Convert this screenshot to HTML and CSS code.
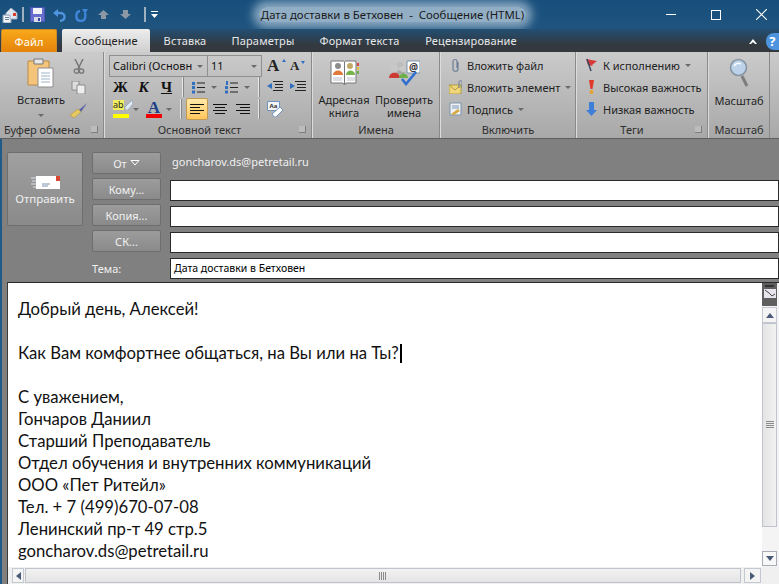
FILE: index.html
```html
<!DOCTYPE html>
<html lang="ru">
<head>
<meta charset="UTF-8">
<title>Дата доставки в Бетховен - Сообщение (HTML)</title>
<link rel="stylesheet" href="styles.css">
</head>
<body>

<div class="window">
  <div class="titlebar">
    <div class="qat">
      <svg class="qat-mail" width="16" height="16" viewBox="0 0 16 16"><path d="M1 8h8v8H1z" fill="#f4f6fa" stroke="#8aa0b8"/><path d="M3 10.500h4M3 12.500h4" stroke="#6a8098"/><path d="M4 6l5-5 6 5v6H8V8H4z" fill="#dfe6ef" stroke="#9fb0c4"/><path d="M11 6h3v3h-3z" fill="#d8402a"/></svg>
      <span class="qat-sep"></span>
      <svg class="qat-save" width="15" height="15" viewBox="0 0 15 15"><path d="M0 0h15v15H0z" fill="#4a55b8"/><path d="M1 1h13v13H1z" fill="#6670cc"/><path d="M3 1h9v6H3z" fill="#f2f4fa"/><path d="M4 10h7v5H4z" fill="#d8dcea"/><path d="M8 11h2v3H8z" fill="#3a4498"/></svg>
      <svg class="qat-undo" width="13" height="14" viewBox="0 0 13 14"><path d="M0 5l5-4v8z" fill="#4f94e0"/><path d="M4 5h3c6 0 6 7 0 8" fill="none" stroke="#4f94e0" stroke-width="2.400"/></svg>
      <svg class="qat-redo" width="13" height="14" viewBox="0 0 13 14"><path d="M13 1H7l3 5z" fill="#3f86d8"/><path d="M5 3C0 4 0 13 6 13c4 0 5-4 4-8" fill="none" stroke="#3f86d8" stroke-width="2.400"/></svg>
      <svg class="qat-up" width="11" height="9" viewBox="0 0 11 9"><path d="M5.500 0L11 5H8v4H3V5H0z" fill="#8c98a4"/></svg>
      <svg class="qat-down" width="11" height="9" viewBox="0 0 11 9"><path d="M5.500 9L11 4H8V0H3v4H0z" fill="#8c98a4"/></svg>
      <span class="qat-sep"></span>
      <svg class="qat-more" width="7" height="7" viewBox="0 0 7 7"><path d="M0 0h7v1H0zM0 3h7L3.500 7z" fill="#fff"/></svg>
    </div>
    <div class="title"><span>Дата доставки в Бетховен&nbsp; -&nbsp; Сообщение (HTML)</span></div>
    <div class="win-btns">
      <span class="win-min"></span>
      <span class="win-max"></span>
      <svg width="11" height="11" viewBox="0 0 11 11"><path d="M0 0l11 11M11 0L0 11" stroke="#fff" stroke-width="1.100"/></svg>
    </div>
  </div>

  <div class="tabs">
    <div class="tab tab-file">Файл</div>
    <div class="tab tab-active">Сообщение</div>
    <div class="tab tab-insert">Вставка</div>
    <div class="tab tab-params">Параметры</div>
    <div class="tab tab-format">Формат текста</div>
    <div class="tab tab-review">Рецензирование</div>
    <div class="tabs-right">
      <svg width="8" height="5" viewBox="0 0 8 5"><path d="M0 5l4-5 4 5H6L4 3 2 5z" fill="#fff"/></svg>
      <span class="help">?</span>
    </div>
  </div>

  <div class="ribbon">
    <div class="group g-clip">
      <div class="group-body clip-body">
        <div class="paste">
          <svg width="28" height="30" viewBox="0 0 28 30"><path d="M1 3h21v24H1z" fill="#f3c47a" stroke="#b98b45"/><path d="M7 1h9v5H7z" fill="#e8e8e8" stroke="#777"/><path d="M11 10h15v19H11z" fill="#fff" stroke="#8d8d8d"/><path d="M14 15h9M14 18h9M14 21h9M14 24h9" stroke="#9db2c8"/></svg>
          <span>Вставить</span>
          <i class="arrow"></i>
        </div>
        <div class="clip-tools">
          <svg width="12" height="15" viewBox="0 0 12 15"><path d="M2 0l5 10M10 0L5 10" stroke="#777" stroke-width="1.500"/><circle cx="3.500" cy="12" r="2.200" fill="none" stroke="#777" stroke-width="1.300"/><circle cx="8.500" cy="12" r="2.200" fill="none" stroke="#777" stroke-width="1.300"/></svg>
          <svg width="15" height="13" viewBox="0 0 15 13"><path d="M1 0h7v9H1z" fill="#ddd" stroke="#8c8c8c"/><path d="M6 4h8v9H6z" fill="#eee" stroke="#8c8c8c"/></svg>
          <svg class="brush" width="17" height="15" viewBox="0 0 17 15"><path d="M17 0l-8 7 2 2z" fill="#5b63a8"/><path d="M8 6L0 12l4 3 7-6z" fill="#e8c860" stroke="#a08a3c" stroke-width=".5"/></svg>
        </div>
      </div>
      <div class="group-label">Буфер обмена<i class="launcher"></i></div>
    </div>

    <div class="group g-text">
      <div class="group-body text-body">
        <div class="font-row">
          <div class="combo combo-font">Calibri (Основн<i class="arrow"></i></div>
          <div class="combo combo-size">11<i class="arrow"></i></div>
          <span class="grow-a">A<i class="up"></i></span>
          <span class="shrink-a">A<i class="down"></i></span>
        </div>
        <div class="tool-row row-style">
          <div class="cell-style">
            <b>Ж</b><b class="it">К</b><b class="ul">Ч</b>
          </div>
          <span class="vsep"></span>
          <div class="cell-list">
            <svg width="13" height="13" viewBox="0 0 13 13"><path d="M5 2h8M5 6.500h8M5 11h8" stroke="#222"/><path d="M0 1h3v3H0zM0 5h3v3H0zM0 9.500h3v3H0z" fill="#2e6fc0"/></svg><i class="arrow"></i>
            <svg class="num" width="13" height="13" viewBox="0 0 13 13"><path d="M5 2h8M5 6.500h8M5 11h8" stroke="#222"/><path d="M1 0h2v4H1zM0 5h3v3H0zM0 9.500h3v3H0z" fill="#2e6fc0"/></svg><i class="arrow"></i>
          </div>
          <span class="vsep"></span>
          <div class="cell-indent">
            <svg width="16" height="12" viewBox="0 0 16 12"><path d="M6 .500h10M8 3.500h8M8 6.500h8M6 9.500h10" stroke="#222"/><path d="M0 5l5-3v6z" fill="#2e6fc0"/></svg>
            <svg width="16" height="12" viewBox="0 0 16 12"><path d="M5 .500h11M7 3.500h9M7 6.500h9M5 9.500h11" stroke="#222"/><path d="M5 5L0 2v6z" fill="#2e6fc0"/></svg>
          </div>
        </div>
        <div class="tool-row">
          <div class="cell-color">
            <span class="marker"><span class="marker-txt">ab</span><svg width="9" height="10" viewBox="0 0 9 10"><path d="M8 0L1 7v3h3l5-6z" fill="#dfe8f2" stroke="#8a9aae" stroke-width=".7"/></svg><i class="bar-y"></i></span><i class="arrow"></i>
            <span class="color-a">A<i class="bar-r"></i></span><i class="arrow"></i>
          </div>
          <span class="vsep"></span>
          <div class="cell-align">
            <span class="align-btn on"><svg width="14" height="10" viewBox="0 0 14 10"><path d="M0 .500h14M0 3.500h10M0 6.500h14M0 9.500h10" stroke="#111"/></svg></span>
            <span class="align-btn"><svg width="14" height="10" viewBox="0 0 14 10"><path d="M0 .500h14M2 3.500h10M0 6.500h14M2 9.500h10" stroke="#111"/></svg></span>
            <span class="align-btn"><svg width="14" height="10" viewBox="0 0 14 10"><path d="M0 .500h14M4 3.500h10M0 6.500h14M4 9.500h10" stroke="#111"/></svg></span>
          </div>
          <span class="vsep"></span>
          <div class="cell-clear">
            <svg width="17" height="16" viewBox="0 0 17 16"><path d="M.5.500h12v9H.5z" fill="#f4f4f4" stroke="#6f93bd"/><path d="M5 13l8-7 3 3-7 7H7z" fill="#fff" stroke="#6f93bd"/><text x="2.500" y="7" class="clear-txt">Аа</text></svg>
          </div>
        </div>
      </div>
      <div class="group-label">Основной текст<i class="launcher"></i></div>
    </div>

    <div class="group g-names">
      <div class="group-body names-body">
        <div class="big-btn">
          <svg width="29" height="26" viewBox="0 0 29 26"><path d="M1 1h12c1 0 1.500 1 1.500 1S15 1 16 1h10v22H16l-1.500 2-1.500-2H1z" fill="#fff" stroke="#777"/><path d="M14.500 2v22" stroke="#777"/><circle cx="8" cy="6" r="3" fill="#8c8c8c"/><path d="M3 15c0-6 10-6 10 0z" fill="#e07a3a"/><circle cx="20" cy="6" r="3" fill="#c4a868"/><path d="M16 15c0-6 9-6 9 0z" fill="#77b34c"/><path d="M3 18h9M3 20h9M17 18h8M17 20h8" stroke="#b8c0cc"/><path d="M27 3h2v3h-2z" fill="#d94a3c"/><path d="M27 7h2v3h-2z" fill="#e8c23c"/><path d="M27 11h2v3h-2z" fill="#6fb04a"/></svg>
          <span>Адресная<br>книга</span>
        </div>
        <div class="big-btn">
          <svg width="31" height="26" viewBox="0 0 31 26"><circle cx="11" cy="5" r="3" fill="#bdbdbd"/><path d="M7 14c0-5 9-5 9 0z" fill="#a8a8a8"/><circle cx="5" cy="8" r="3.500" fill="#c8c8c8"/><path d="M0 18c0-7 11-7 11 0z" fill="#cc3a34"/><circle cx="14" cy="9" r="3" fill="#c8c8c8"/><path d="M10 18c0-6 9-6 9 0z" fill="#6fb04a"/><path d="M18 1h13v12H18z" fill="#fff" stroke="#7d93ad"/><text x="20" y="11" class="at">@</text><path d="M13 19l4 5 10-12" fill="none" stroke="#2f6fd0" stroke-width="2.600"/></svg>
          <span>Проверить<br>имена</span>
        </div>
      </div>
      <div class="group-label">Имена</div>
    </div>

    <div class="group g-include">
      <div class="group-body list-body">
        <div class="list-item">
          <svg width="13" height="14" viewBox="0 0 13 14"><path d="M9 4v7c0 3-5 3-5 0V3c0-2 4-2 4 0v7" fill="none" stroke="#6f7f95" stroke-width="1.200"/></svg>
          <span>Вложить файл</span>
        </div>
        <div class="list-item">
          <svg width="13" height="14" viewBox="0 0 13 14"><path d="M0 5h12v9H0z" fill="#f0d67a" stroke="#b09a40"/><path d="M0 5l6 5 6-5" fill="none" stroke="#b09a40"/><path d="M10 8V2c0-2 3-2 3 0v6" fill="none" stroke="#6f7f95"/></svg>
          <span>Вложить элемент</span><i class="arrow"></i>
        </div>
        <div class="list-item">
          <svg width="13" height="14" viewBox="0 0 13 14"><path d="M1 1h11v12H1z" fill="#eef2f8" stroke="#7d93ad"/><path d="M3 4h7M3 6h7" stroke="#7d93ad"/><path d="M2 12l7-5 2 2-6 4z" fill="#d9a83c"/></svg>
          <span>Подпись</span><i class="arrow"></i>
        </div>
      </div>
      <div class="group-label">Включить</div>
    </div>

    <div class="group g-tags">
      <div class="group-body list-body">
        <div class="list-item">
          <svg width="13" height="14" viewBox="0 0 13 14"><path d="M1 1l11 2-5 4 1 1-5-1z" fill="#d83a3a"/><path d="M2 1l4 12" stroke="#39485f" stroke-width="1.500"/></svg>
          <span>К исполнению</span><i class="arrow"></i>
        </div>
        <div class="list-item">
          <svg width="13" height="14" viewBox="0 0 13 14"><path d="M4 0h5L7.500 9h-2z" fill="#e0392c"/><circle cx="6.500" cy="12" r="2" fill="#e8a02c"/></svg>
          <span>Высокая важность</span>
        </div>
        <div class="list-item">
          <svg width="13" height="14" viewBox="0 0 13 14"><path d="M4 0h5v8h3l-5.500 6L1 8h3z" fill="#3f7fd8"/></svg>
          <span>Низкая важность</span>
        </div>
      </div>
      <div class="group-label">Теги<i class="launcher"></i></div>
    </div>

    <div class="group g-zoom">
      <div class="group-body zoom-body">
        <svg width="21" height="30" viewBox="0 0 21 30"><circle cx="9.500" cy="9.500" r="8" fill="#bcd2e8" stroke="#8795a3" stroke-width="1.600"/><path d="M5 8c2-3 5-3 7-2" fill="none" stroke="#fff" stroke-width="1.500"/><path d="M13 18l5 10" stroke="#7e7e7e" stroke-width="3"/></svg>
        <span>Масштаб</span>
      </div>
      <div class="group-label">Масштаб</div>
    </div>
    <div class="group-end"></div>
  </div>

  <div class="compose">
    <div class="header-area">
      <button class="send">
        <svg width="29" height="15" viewBox="0 0 29 15"><path d="M0 3h5M1 6h4M0 9h5M2 12h3" stroke="#d9dee6"/><path d="M5 1h24v13H5z" fill="#fff"/><path d="M25 1h4v5h-4z" fill="#d9482e"/><path d="M11 9h8M11 11h6" stroke="#7d93ad"/></svg>
        <span>Отправить</span>
      </button>
      <div class="fields">
        <button class="addr-btn">От<svg width="10" height="6" viewBox="0 0 10 6"><path d="M1 .500h8L5 5z" fill="none" stroke="#fff"/></svg></button>
        <div class="from">goncharov.ds@petretail.ru</div>
        <button class="addr-btn">Кому...</button>
        <div class="input"></div>
        <button class="addr-btn">Копия...</button>
        <div class="input"></div>
        <button class="addr-btn">СК...</button>
        <div class="input"></div>
        <div class="subject-label">Тема:</div>
        <div class="input subject">Дата доставки в Бетховен</div>
      </div>
    </div>

    <div class="editor">
      <div class="doc">
        <p>Добрый день, Алексей!</p>
        <p>&nbsp;</p>
        <p>Как Вам комфортнее общаться, на Вы или на Ты?<span class="caret"></span></p>
        <p>&nbsp;</p>
        <p>С уважением,</p>
        <p>Гончаров Даниил</p>
        <p>Старший Преподаватель</p>
        <p>Отдел обучения и внутренних коммуникаций</p>
        <p>ООО «Пет Ритейл»</p>
        <p>Тел. + 7 (499)670-07-08</p>
        <p>Ленинский пр-т 49 стр.5</p>
        <p>goncharov.ds@petretail.ru</p>
      </div>
      <div class="vscroll">
        <div class="split">
          <i></i>
          <svg width="12" height="9" viewBox="0 0 12 9"><path d="M0 0h12v9H0z" fill="#e8e4ee"/><path d="M1 1l4 3M5 4l3 3M8 7l3-2" stroke="#444"/></svg>
        </div>
        <div class="sb-btn"><i class="tri-up"></i></div>
        <div class="v-thumb"><span></span></div>
        <div class="sb-trough"></div>
        <div class="sb-btn sb-down"><i class="tri-down"></i></div>
      </div>
      <div class="hscroll">
        <div class="sb-btn-h"><i class="tri-left"></i></div>
        <div class="h-thumb"><span></span></div>
        <div class="sb-btn-h sb-right"><i class="tri-right"></i></div>
      </div>
    </div>
  </div>
</div>

</body>
</html>
```

FILE: styles.css
```css
/* General */
* {
  box-sizing: border-box;
}

html, body {
  margin: 0;
  padding: 0;
  height: 100%;
  overflow: hidden;
}

body {
  font-family: "Noto Sans", Arial, sans-serif;
  font-size: 11px;
  color: #222;
}

.window {
  width: 779px;
  height: 584px;
  display: flex;
  flex-direction: column;
  background: #808080;
}

i {
  display: block;
}

svg {
  display: block;
  flex: none;
}

/* Title bar */
.titlebar {
  height: 29px;
  display: flex;
  align-items: center;
  background: linear-gradient(#174f7c, #1f547e);
}

.qat {
  display: flex;
  align-items: center;
  padding-left: 2px;
}

.qat-sep {
  width: 2px;
  height: 15px;
  background: #9fb0bf;
  margin: 0 5px 0 4px;
}

.qat-undo { margin-left: 3px; }
.qat-save { margin-left: 1px; margin-right: 5px; }
.qat-redo { margin-left: 9px; }
.qat-up { margin-left: 10px; }
.qat-down { margin-left: 11px; margin-right: 9px; }

.title {
  flex: 1;
  text-align: center;
  color: #1a1a1a;
  font-size: 11.400px;
  margin-left: 22px;
}

.title span {
  background: rgba(185, 205, 222, 0.75);
  box-shadow: 0 0 10px 6px rgba(185, 205, 222, 0.7);
  border-radius: 8px;
  padding: 0 2px;
}

.win-btns {
  width: 174px;
  display: flex;
  align-items: center;
  gap: 35px;
  padding-left: 61px;
}

.win-min {
  width: 10px;
  height: 1px;
  background: #fff;
}

.win-max {
  width: 10px;
  height: 10px;
  border: 1px solid #fff;
}

/* Tabs */
.tabs {
  height: 23px;
  display: flex;
  align-items: flex-end;
  background: linear-gradient(#224f74, #33393e 70%);
  color: #e8e8e8;
  font-size: 11px;
  letter-spacing: 0.15px;
}

.tab {
  height: 23px;
  line-height: 23px;
  text-align: center;
}

.tab-file {
  width: 56px;
  margin-left: 1px;
  color: #fff;
  background: linear-gradient(#f8a81a, #e5830a);
  border: 1px solid #c98a2c;
  border-bottom: none;
  border-radius: 2px 2px 0 0;
}

.tab-active {
  width: 88px;
  margin-left: 5px;
  color: #222;
  background: linear-gradient(#ededed, #cfcfcf);
  border-radius: 2px 2px 0 0;
}

.tab-insert { width: 70px; }
.tab-params { width: 86px; }
.tab-format { width: 107px; }
.tab-review { width: 116px; }

.tabs-right {
  margin-left: auto;
  height: 22px;
  display: flex;
  align-items: center;
  gap: 9px;
}

.help {
  width: 13px;
  height: 17px;
  line-height: 17px;
  text-align: center;
  background: #4d93de;
  color: #fff;
  font-weight: 700;
  font-size: 13px;
  border-radius: 8px 0 0 8px;
}

/* Ribbon */
.ribbon {
  height: 87px;
  display: flex;
  background: linear-gradient(#cbcbcb, #a8a8a8);
  border-bottom: 1px solid #5e5e5e;
}

.group {
  display: flex;
  flex-direction: column;
  border-right: 1px solid #8a8a8a;
  border-left: 1px solid #dcdcdc;
}

.group-body {
  flex: 1;
  min-height: 0;
}

.group-label {
  height: 17px;
  line-height: 17px;
  text-align: center;
  color: #2e2e2e;
  position: relative;
}

.launcher {
  position: absolute;
  right: 5px;
  top: 5px;
  width: 7px;
  height: 7px;
  border: 1px solid #7e7e7e;
  border-width: 0 1px 1px 0;
  background: #bcbcbc;
}

.g-clip { width: 104px; border-left: none; }
.g-clip .group-label { padding-right: 19px; }
.g-text { width: 208px; }
.g-text .group-label { padding-right: 17px; }
.g-names { width: 128px; }
.g-include { width: 136px; }
.g-tags { width: 132px; }
.g-tags .group-label { padding-right: 20px; }
.g-zoom { width: 62px; }
.group-end { flex: 1; }

.arrow {
  display: inline-block;
  width: 0;
  height: 0;
  border: 3px solid transparent;
  border-top: 3px solid #6a6a6a;
  border-bottom: none;
}

/* Clipboard */
.clip-body {
  display: flex;
  padding-left: 19px;
}

.paste {
  width: 44px;
  display: flex;
  flex-direction: column;
  align-items: center;
  padding-top: 6px;
}

.paste span {
  margin-top: 4px;
}

.paste .arrow {
  margin-top: 7px;
}

.clip-tools {
  width: 17px;
  display: flex;
  flex-direction: column;
  align-items: center;
  gap: 7px;
  margin-left: 7px;
  padding-top: 7px;
}

.brush {
  margin-top: 2px;
}

/* Basic text */
.text-body {
  padding: 3px 0 0 4px;
}

.font-row {
  display: flex;
  align-items: center;
  height: 22px;
}

.combo {
  height: 22px;
  line-height: 20px;
  border: 1px solid #8f8f8f;
  padding-left: 3px;
  position: relative;
  color: #111;
  white-space: nowrap;
}

.combo .arrow {
  position: absolute;
  right: 4px;
  top: 9px;
}

.combo-font { width: 99px; }
.combo-size { width: 55px; margin-left: -1px; }

.grow-a, .shrink-a {
  font-family: "Liberation Serif", serif;
  font-weight: 700;
  color: #222;
  position: relative;
}

.grow-a { font-size: 17px; margin-left: 5px; width: 23px; }
.shrink-a { font-size: 13px; width: 15px; }

.up, .down {
  position: absolute;
  right: 4px;
  top: 3px;
  width: 0;
  height: 0;
  border: 2px solid transparent;
}

.up { border-bottom: 3px solid #2e6fc0; border-top: none; }
.down { border-top: 3px solid #2e6fc0; border-bottom: none; right: 0; }

.tool-row {
  display: flex;
  align-items: center;
  height: 22px;
}

.row-style {
  margin-top: -1px;
}

.vsep {
  width: 1px;
  height: 20px;
  background: #e6e6e6;
  border-right: 1px solid #888;
  box-sizing: content-box;
}

.cell-style {
  width: 73px;
  display: flex;
  align-items: center;
}

.cell-style b {
  font-family: "Liberation Serif", serif;
  font-size: 15px;
  color: #111;
  width: 23px;
  text-align: center;
}

.cell-style .it { font-style: italic; }
.cell-style .ul { text-decoration: underline; }

.cell-list {
  width: 74px;
  display: flex;
  align-items: center;
  padding-left: 8px;
  gap: 6px;
}

.cell-list .num { margin-left: 2px; }

.cell-indent {
  display: flex;
  align-items: center;
  gap: 7px;
  padding-left: 7px;
}

.cell-color {
  width: 71px;
  display: flex;
  align-items: center;
  padding-left: 4px;
  gap: 4px;
}

.marker {
  width: 16px;
  height: 19px;
  position: relative;
  display: flex;
}

.marker-txt {
  background: #f0f060;
  font-size: 9px;
  line-height: 10px;
  height: 10px;
}

.bar-y, .bar-r {
  position: absolute;
  left: 0;
  bottom: 1px;
  width: 16px;
  height: 4px;
}

.bar-y { background: #ffff00; }
.bar-r { background: #f00000; }

.color-a {
  width: 16px;
  height: 19px;
  position: relative;
  margin-left: 3px;
  text-align: center;
  font-family: "Liberation Serif", serif;
  font-weight: 700;
  font-size: 17px;
  line-height: 15px;
  color: #1d3f8a;
}

.cell-align {
  width: 76px;
  display: flex;
  align-items: center;
  gap: 1px;
  padding-left: 4px;
}

.align-btn {
  width: 22px;
  height: 22px;
  display: flex;
  align-items: center;
  justify-content: center;
}

.align-btn.on {
  background: linear-gradient(#ffe9a8, #ffc65c);
  border: 1px solid #c49a52;
  border-radius: 2px;
}

.cell-clear {
  padding-left: 7px;
}

.clear-txt {
  font-size: 6px;
  font-weight: 700;
  fill: #333;
}

.at {
  font-size: 10px;
  font-weight: 700;
  fill: #333;
}

/* Big buttons */
.names-body {
  display: flex;
  padding-left: 1px;
}

.big-btn {
  width: 60px;
  display: flex;
  flex-direction: column;
  align-items: center;
  padding-top: 8px;
  text-align: center;
  line-height: 13px;
  white-space: nowrap;
}

.big-btn span {
  margin-top: 7px;
}

/* Small lists */
.list-body {
  padding: 2px 0 0 8px;
}

.list-item {
  height: 22px;
  display: flex;
  align-items: center;
  gap: 5px;
  white-space: nowrap;
}

.zoom-body {
  display: flex;
  flex-direction: column;
  align-items: center;
  padding-top: 6px;
}

.zoom-body span {
  margin-top: 5px;
}

/* Compose header */
.compose {
  flex: 1;
  min-height: 0;
  display: flex;
  flex-direction: column;
  border-left: 2px solid #1f5a88;
  padding-left: 5px;
}

.header-area {
  height: 143px;
  display: flex;
  padding-top: 13px;
}

.send {
  width: 76px;
  height: 74px;
  margin: 0;
  padding: 22px 0 0;
  display: flex;
  flex-direction: column;
  align-items: center;
  gap: 1px;
  background: linear-gradient(#a0a0a0, #8a8a8a);
  border: 1px solid #6e6e6e;
  border-radius: 2px;
  color: #f0f0f0;
  font-family: inherit;
  font-size: 11.500px;
}

.fields {
  margin-left: 9px;
  flex: 1;
  display: grid;
  grid-template-columns: 69px 1fr;
  grid-auto-rows: 22px;
  column-gap: 9px;
  row-gap: 4px;
}

.addr-btn {
  margin: 0;
  padding: 0;
  display: flex;
  align-items: center;
  justify-content: center;
  gap: 3px;
  background: linear-gradient(#9c9c9c, #8a8a8a);
  border: 1px solid #6e6e6e;
  border-radius: 2px;
  color: #f0f0f0;
  font: inherit;
}

.from {
  line-height: 20px;
  color: #f0f0f0;
  padding-left: 2px;
}

.input {
  height: 21px;
  margin-top: 2px;
  background: #fff;
  border: 1px solid #2a2a2a;
}

.subject {
  padding-left: 3px;
  line-height: 19px;
  font-size: 10.500px;
  color: #000;
}

.subject-label {
  color: #f0f0f0;
  line-height: 26px;
}

/* Message body */
.editor {
  flex: 1;
  min-height: 0;
  background: #fff;
  border-top: 1px solid #2a2a2a;
  border-left: 1px solid #3a3a3a;
  display: grid;
  grid-template-columns: 1fr 17px;
  grid-template-rows: 1fr 17px;
}

.doc {
  padding: 15px 0 0 10px;
  overflow: hidden;
  color: #111;
  font-family: Lato, "Noto Sans", sans-serif;
  font-size: 16.700px;
}

.doc p {
  margin: 0;
  line-height: 22px;
  height: 22px;
  white-space: nowrap;
}

.caret {
  display: inline-block;
  width: 2px;
  height: 19px;
  margin-left: 1px;
  background: #000;
  vertical-align: -4px;
}

.vscroll {
  display: flex;
  flex-direction: column;
  padding-right: 2px;
  padding-bottom: 1px;
  background: #f4f4f4;
}

.split {
  height: 23px;
  background: #5f5f5f;
  display: flex;
  flex-direction: column;
  align-items: center;
  padding-top: 2px;
  gap: 2px;
}

.split i {
  width: 9px;
  height: 2px;
  background: #333;
}

.sb-btn {
  height: 16px;
  margin-top: 1px;
  background: #f4f4f4;
  border: 1px solid #c4c8d0;
  display: flex;
  align-items: center;
  justify-content: center;
}

.sb-down {
  height: 15px;
  margin-top: 0;
  background: #f8f8f8;
  border-color: #a8acb4;
}

.v-thumb {
  height: 204px;
  background: linear-gradient(to right, #e4e4e4, #f2f2f2);
  border: 1px solid #bfc3cb;
  display: flex;
  align-items: center;
  justify-content: center;
}

.v-thumb span {
  width: 8px;
  height: 8px;
  background: repeating-linear-gradient(#8a8a8a 0 1px, transparent 1px 2px);
}

.sb-trough {
  flex: 1;
}

.tri-up, .tri-down, .tri-left, .tri-right {
  width: 0;
  height: 0;
  border: 4px solid transparent;
}

.tri-up { border-bottom: 5px solid #4a5a78; border-top: none; }
.tri-down { border-top: 5px solid #4a5a78; border-bottom: none; }
.tri-left { border-right: 5px solid #4a5a78; border-left: none; }
.tri-right { border-left: 5px solid #4a5a78; border-right: none; }

.hscroll {
  grid-row: 2;
  grid-column: 1 / 3;
  display: flex;
  padding: 1px 18px 1px 4px;
  gap: 1px;
  background: #f0f0f0;
}

.sb-btn-h {
  width: 12px;
  background: #f4f4f4;
  border: 1px solid #c4c8d0;
  display: flex;
  align-items: center;
  justify-content: center;
}

.sb-right {
  width: 17px;
  margin-left: 2px;
}

.h-thumb {
  flex: 1;
  background: linear-gradient(#f2f2f2, #e4e4e4);
  border: 1px solid #bfc3cb;
  display: flex;
  align-items: center;
  justify-content: center;
}

.h-thumb span {
  width: 8px;
  height: 8px;
  background: repeating-linear-gradient(to right, #8a8a8a 0 1px, transparent 1px 2px);
}
```
